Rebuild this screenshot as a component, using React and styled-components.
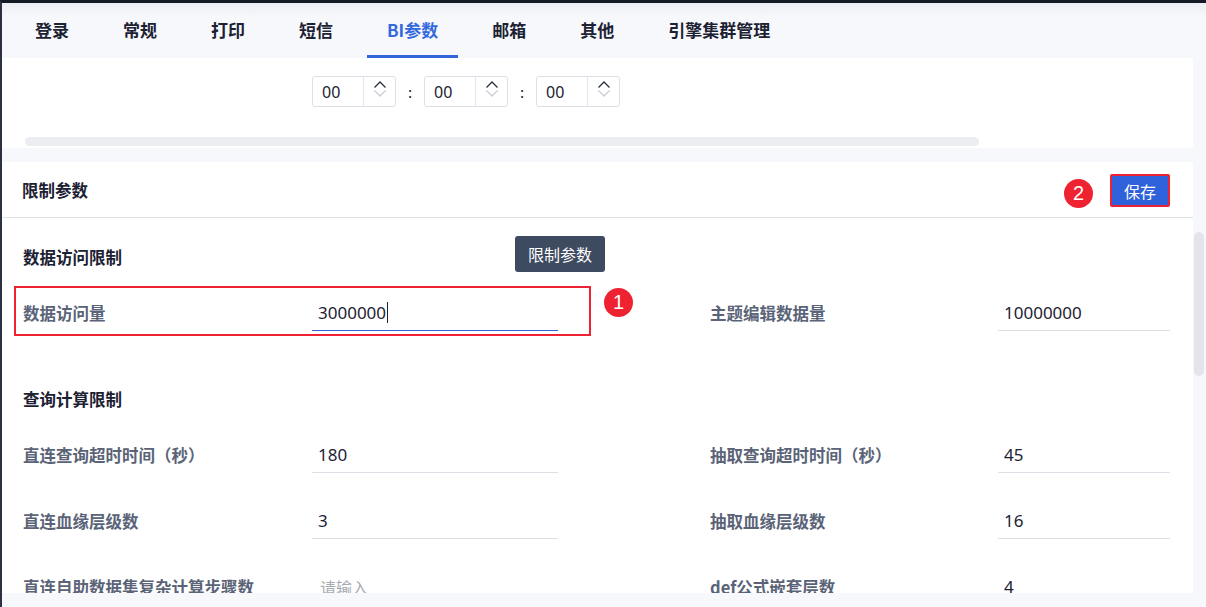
import React from "react";
import styled, { createGlobalStyle } from "styled-components";

const Global = createGlobalStyle`
  html, body { margin: 0; padding: 0; }
  body {
    background: #f7f8fc;
    font-family: "Noto Sans CJK SC", "Noto Sans", sans-serif;
    overflow: hidden;
  }
`;

const Frame = styled.div`
  height: 607px;
  display: flex;
  flex-direction: column;
  border-top: 3px solid #161a27;
  border-left: 2px solid #2c3142;
  box-sizing: border-box;
  background: #f7f8fc;
`;

const TabBar = styled.nav`
  height: 55px;
  flex: none;
  display: flex;
  align-items: stretch;
  padding-left: 13px;
  gap: 14px;
  background: linear-gradient(#eceef3 0px, #f7f8fc 14px);
`;

const Tab = styled.div`
  position: relative;
  display: flex;
  align-items: center;
  padding: 0 20px 2px;
  font-size: 17px;
  font-weight: 700;
  color: ${(p) => (p.$active ? "#3468dd" : "#1c2233")};
  &::after {
    content: "";
    position: absolute;
    left: 0;
    right: 0;
    bottom: 0;
    height: 3px;
    background: ${(p) => (p.$active ? "#3366d8" : "transparent")};
  }
`;

const Body = styled.div`
  flex: 1;
  display: flex;
  min-height: 0;
`;

const MainColumn = styled.div`
  width: 1191px;
  display: flex;
  flex-direction: column;
  padding-bottom: 14px;
`;

const Gutter = styled.div`
  flex: 1;
  padding: 174px 0 0 1px;
`;

const VThumb = styled.div`
  width: 10px;
  height: 144px;
  border-radius: 5px;
  background: #e4e5ea;
`;

const UpperPanel = styled.section`
  height: 90px;
  flex: none;
  background: #fff;
  display: flex;
  flex-direction: column;
  padding-top: 18px;
  box-sizing: border-box;
`;

const TimeRow = styled.div`
  display: flex;
  align-items: center;
  padding-left: 310px;
`;

const Spinner = styled.div`
  width: 84px;
  height: 31px;
  box-sizing: border-box;
  border: 1px solid #dcdfe6;
  border-radius: 3px;
  display: flex;
`;

const SpinValue = styled.div`
  width: 50px;
  padding-left: 9px;
  box-sizing: border-box;
  display: flex;
  align-items: center;
  font-family: "Noto Sans", sans-serif;
  font-size: 16px;
  color: #1c2233;
`;

const SpinArrows = styled.div`
  flex: 1;
  border-left: 1px solid #e4e6eb;
  display: flex;
  flex-direction: column;
  align-items: center;
  padding-top: 3px;
`;

const Colon = styled.span`
  width: 28px;
  text-align: center;
  font-size: 15px;
  color: #1c2233;
`;

const HScroll = styled.div`
  margin: 30px 0 0 23px;
  width: 954px;
  height: 9px;
  border-radius: 5px;
  background: #ebedf0;
`;

const LowerPanel = styled.section`
  margin-top: 14px;
  flex: 1;
  background: #fff;
  overflow: hidden;
  display: flex;
  flex-direction: column;
`;

const PanelHeader = styled.header`
  height: 55px;
  flex: none;
  border-bottom: 1px solid #dfe1e7;
  display: flex;
  align-items: center;
  justify-content: space-between;
  padding: 0 23px 0 20px;
`;

const PanelTitle = styled.h2`
  margin: 0;
  font-size: 16.5px;
  font-weight: 700;
  color: #1b2132;
`;

const SaveWrap = styled.div`
  position: relative;
  margin-top: 2px;
`;

const SaveButton = styled.button`
  width: 60px;
  height: 33px;
  border: 2px solid #ee2233;
  border-radius: 2px;
  background: #2f62da;
  color: #fff;
  font-family: inherit;
  font-size: 16px;
  padding: 0;
  cursor: pointer;
`;

const Badge = styled.span`
  position: absolute;
  left: ${(p) => p.$x}px;
  top: ${(p) => p.$y}px;
  width: 29px;
  height: 29px;
  border-radius: 50%;
  background: #ee2230;
  color: #fff;
  font-family: "Liberation Sans", Arial, sans-serif;
  font-size: 20px;
  display: flex;
  align-items: center;
  justify-content: center;
`;

const Content = styled.div`
  padding: 27px 23px 0 21px;
  display: flex;
  flex-direction: column;
`;

const Section = styled.div`
  display: flex;
  flex-direction: column;
  gap: 30px;
  margin-bottom: 56px;
`;

const SectionTitle = styled.h3`
  position: relative;
  margin: 0 0 -4px;
  height: 24px;
  line-height: 24px;
  font-size: 16.5px;
  font-weight: 700;
  color: #1b2132;
`;

const Tooltip = styled.div`
  position: absolute;
  left: 492px;
  top: -9px;
  width: 90px;
  height: 36px;
  border-radius: 3px;
  background: #3e4a5f;
  color: #fff;
  font-size: 16px;
  font-weight: 400;
  display: flex;
  align-items: center;
  justify-content: center;
`;

const Row = styled.div`
  position: relative;
  display: grid;
  grid-template-columns: 289px 246px 152px 288px 172px;
  height: 36px;
  align-items: center;
`;

const Label = styled.label`
  font-size: 16.5px;
  font-weight: 700;
  color: #5a6377;
  white-space: nowrap;
`;

const Value = styled.div`
  height: 36px;
  box-sizing: border-box;
  border-bottom: 1px solid ${(p) => (p.$focused ? "#3366d8" : "#dcdfe6")};
  padding: 0 6px;
  display: flex;
  align-items: center;
  font-family: "Noto Sans", "Noto Sans CJK SC", sans-serif;
  font-size: 17px;
  color: ${(p) => (p.$placeholder ? "#a8abb2" : "#1c2233")};
  ${(p) => p.$placeholder && `font-family: "Noto Sans CJK SC", sans-serif; font-size: 16px; padding-left: 8px;`}
`;

const Caret = styled.span`
  display: inline-block;
  width: 1px;
  height: 21px;
  background: #1c2233;
  margin-left: 1px;
`;

const Highlight = styled.div`
  position: absolute;
  left: -9px;
  top: -9px;
  width: 577px;
  height: 50px;
  box-sizing: border-box;
  border: 2px solid #ee2233;
  pointer-events: none;
`;

const Spacer = styled.span``;

const Chevron = ({ up, color }) => (
  <svg width="14" height="9" viewBox="0 0 14 9">
    <path
      d={up ? "M1.5 7.5 L7 2 L12.5 7.5" : "M1.5 1.5 L7 7 L12.5 1.5"}
      fill="none"
      stroke={color}
      strokeWidth="1.3"
    />
  </svg>
);

const TimeSpinner = ({ value }) => (
  <Spinner>
    <SpinValue>{value}</SpinValue>
    <SpinArrows>
      <Chevron up color="#2a3040" />
      <Chevron color="#c8ccd4" />
    </SpinArrows>
  </Spinner>
);

const tabs = ["登录", "常规", "打印", "短信", "BI参数", "邮箱", "其他", "引擎集群管理"];

const Field = ({ label, value, placeholder, focused }) => (
  <>
    <Label>{label}</Label>
    <Value $focused={focused} $placeholder={!value}>
      {value || placeholder}
      {focused && <Caret />}
    </Value>
  </>
);

const queryRows = [
  ["直连查询超时时间（秒）", "180", "抽取查询超时时间（秒）", "45"],
  ["直连血缘层级数", "3", "抽取血缘层级数", "16"],
  ["直连自助数据集复杂计算步骤数", "", "def公式嵌套层数", "4"],
];

export default function App() {
  return (
    <>
      <Global />
      <Frame>
        <TabBar>
          {tabs.map((t) => (
            <Tab key={t} $active={t === "BI参数"}>
              {t}
            </Tab>
          ))}
        </TabBar>
        <Body>
          <MainColumn>
            <UpperPanel>
              <TimeRow>
                <TimeSpinner value="00" />
                <Colon>:</Colon>
                <TimeSpinner value="00" />
                <Colon>:</Colon>
                <TimeSpinner value="00" />
              </TimeRow>
              <HScroll />
            </UpperPanel>
            <LowerPanel>
              <PanelHeader>
                <PanelTitle>限制参数</PanelTitle>
                <SaveWrap>
                  <Badge $x={-46} $y={5}>2</Badge>
                  <SaveButton>保存</SaveButton>
                </SaveWrap>
              </PanelHeader>
              <Content>
                <Section>
                  <SectionTitle>
                    数据访问限制
                    <Tooltip>限制参数</Tooltip>
                  </SectionTitle>
                  <Row>
                    <Highlight />
                    <Badge $x={581} $y={-7}>1</Badge>
                    <Field label="数据访问量" value="3000000" focused />
                    <Spacer />
                    <Field label="主题编辑数据量" value="10000000" />
                  </Row>
                </Section>
                <Section>
                  <SectionTitle>查询计算限制</SectionTitle>
                  {queryRows.map(([l1, v1, l2, v2]) => (
                    <Row key={l1}>
                      <Field label={l1} value={v1} placeholder="请输入" />
                      <Spacer />
                      <Field label={l2} value={v2} />
                    </Row>
                  ))}
                </Section>
              </Content>
            </LowerPanel>
          </MainColumn>
          <Gutter>
            <VThumb />
          </Gutter>
        </Body>
      </Frame>
    </>
  );
}
